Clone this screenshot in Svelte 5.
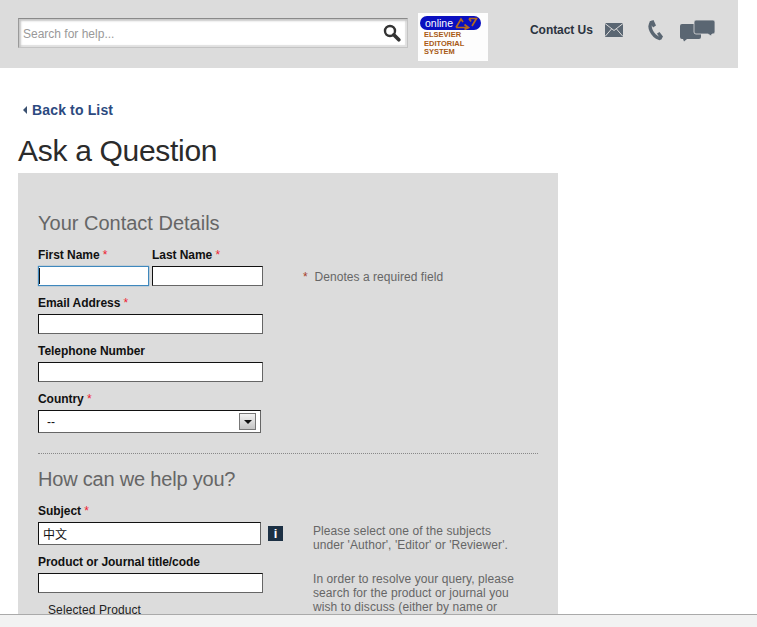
<script>
	let search = $state('');
	let subject = $state('中文');
</script>

<div class="page">
	<header class="top">
		<div class="search">
			<input type="text" placeholder="Search for help..." bind:value={search} />
			<svg class="search-icon" width="18" height="18" viewBox="0 0 18 18">
				<circle cx="7" cy="7" r="5" fill="none" stroke="#333" stroke-width="2.4" />
				<path d="M10.8 10.8 L15.8 15.8" stroke="#333" stroke-width="3.6" stroke-linecap="round" />
			</svg>
		</div>

		<div class="logo">
			<div class="pill">
				<span>online</span>
				<svg width="23" height="13" viewBox="0 0 23 13">
					<path d="M1 10.5 L6 2 L8 5 M1 10.5 H13 M9.5 7.5 L13.5 10.5 L9.5 12.5 M14 1.5 H21.5 L17 9 M14 1.5 L16 4.5" fill="none" stroke="#b4691f" stroke-width="1.7" />
				</svg>
			</div>
			<div class="logo-text">ELSEVIER<br />EDITORIAL<br />SYSTEM</div>
		</div>

		<div class="contact">
			<span class="contact-label">Contact Us</span>
			<svg class="mail" width="18" height="14" viewBox="0 0 18 14">
				<rect width="18" height="14" fill="#5a6672" />
				<path d="M0 0.5 L9 7.5 L18 0.5 M0 13.5 L6.5 6 M18 13.5 L11.5 6" fill="none" stroke="#dcdcdc" stroke-width="1" />
			</svg>
			<svg class="phone" width="16" height="21" viewBox="0 0 16 21">
				<path d="M4.5 2.5 C1 6 4.5 15.5 12.5 18.5" fill="none" stroke="#5a6672" stroke-width="3.4" stroke-linecap="round" />
				<path d="M2.5 1.5 L6.5 0 L9 5.5 L6 7.5 Z M10 13.5 L12.5 12 L16 16.5 L14 20 Z" fill="#5a6672" />
			</svg>
			<svg class="chat" width="35" height="22" viewBox="0 0 35 22">
				<path d="M2 4 H19 Q21 4 21 6 V17 Q21 19 19 19 H7 L4 21.5 L3 19 H2 Q0 19 0 17 V6 Q0 4 2 4 Z" fill="#5a6672" />
				<path d="M16 0 H33 Q35 0 35 2 V12 Q35 14 33 14 H32 L31 16 L28 14 H16 Q14 14 14 12 V2 Q14 0 16 0 Z" fill="#5a6672" stroke="#dcdcdc" stroke-width="0.8" />
			</svg>
		</div>
	</header>

	<main class="content">
		<a class="back" href="#list"><span class="back-arrow"></span>Back to List</a>
		<h1>Ask a Question</h1>

		<form class="panel">
			<h2>Your Contact Details</h2>

			<div class="name-row">
				<div class="field half">
					<label for="first">First Name <em>*</em></label>
					<input id="first" class="focused" type="text" />
				</div>
				<div class="field half">
					<label for="last">Last Name <em>*</em></label>
					<input id="last" type="text" />
				</div>
				<p class="required"><em>*</em>&nbsp; Denotes a required field</p>
			</div>

			<div class="field">
				<label for="email">Email Address <em>*</em></label>
				<input id="email" type="text" />
			</div>
			<div class="field">
				<label for="phone">Telephone Number</label>
				<input id="phone" type="text" />
			</div>
			<div class="field narrow">
				<label for="country">Country <em>*</em></label>
				<div class="select">
					<select id="country"><option>--</option></select>
					<span class="select-btn"></span>
				</div>
			</div>

			<div class="divider"></div>

			<h2 class="tight">How can we help you?</h2>

			<div class="help-grid">
				<div class="field subject">
					<label for="subject">Subject <em>*</em></label>
					<div class="with-info">
						<input id="subject" class="tall" type="text" bind:value={subject} />
						<span class="info">i</span>
					</div>
				</div>
				<p class="note first">Please select one of the subjects<br />under 'Author', 'Editor' or 'Reviewer'.</p>

				<div class="field">
					<label for="product">Product or Journal title/code</label>
					<input id="product" type="text" />
					<div class="selected">Selected Product</div>
				</div>
				<p class="note second">In order to resolve your query, please<br />search for the product or journal you<br />wish to discuss (either by name or</p>
			</div>
		</form>
	</main>

	<div class="bottom-bar"></div>
</div>

<style>
	:global(html), :global(body) {
		margin: 0;
		height: 100%;
		overflow: hidden;
		background: #fff;
	}

	.page {
		font-family: "Liberation Sans", Arial, sans-serif;
		font-size: 12px;
		color: #111;
	}

	.top {
		width: 738px;
		height: 68px;
		background: #dcdcdc;
		display: flex;
		box-sizing: border-box;
		padding: 13px 0 0 18px;
	}

	.search {
		width: 390px;
		height: 30px;
		margin-top: 5px;
		box-sizing: border-box;
		display: flex;
		align-items: center;
		background: #fff;
		border-top: 1px solid #8a8a8a;
		border-left: 1px solid #9a9a9a;
		border-right: 1px solid #c4c4c4;
		border-bottom: 1px solid #c4c4c4;
		box-shadow: inset 2px 2px 2px #c8c8c8, inset -2px -2px 1px #e0e0e0;
	}

	.search input {
		flex: 1;
		border: 0;
		background: transparent;
		outline: 0;
		height: 26px;
		padding: 1px 0 0 4px;
		font: 12px "Liberation Sans", Arial, sans-serif;
		min-width: 0;
	}

	.search input::placeholder {
		color: #999;
		opacity: 1;
	}

	.search-icon {
		margin-right: 6px;
	}

	.logo {
		width: 70px;
		height: 48px;
		margin-left: 10px;
		background: #fdfdfd;
		box-sizing: border-box;
		padding: 3px 2px 0;
	}

	.pill {
		height: 14px;
		width: 61px;
		background: #0a0fc0;
		border-radius: 7px;
		display: flex;
		align-items: center;
		justify-content: space-between;
		padding: 0 3px 0 5px;
		box-sizing: border-box;
		color: #fff;
		font-size: 10.5px;
		line-height: 14px;
	}

	.logo-text {
		margin: 1px 0 0 4px;
		font-size: 7.5px;
		line-height: 8.7px;
		font-weight: bold;
		color: #a85a14;
	}

	.contact {
		display: flex;
		align-items: flex-start;
		margin-left: 42px;
		padding-top: 7px;
	}

	.contact-label {
		font-weight: bold;
		color: #2b3340;
		line-height: 20px;
		width: 75px;
		letter-spacing: -0.05px;
	}

	.mail {
		margin-top: 3px;
	}

	.phone {
		margin: 0 0 0 24px;
	}

	.chat {
		margin: 0 0 0 17px;
	}

	.back {
		display: block;
		margin: 33px 0 0 23px;
		line-height: 18px;
		font-size: 14px;
		font-weight: bold;
		color: #2c4a80;
		text-decoration: none;
		letter-spacing: 0.15px;
	}

	.back-arrow {
		display: inline-block;
		width: 0;
		height: 0;
		border-style: solid;
		border-width: 4px 4px 4px 0;
		border-color: transparent #3a5070 transparent transparent;
		margin-right: 5px;
		vertical-align: 1px;
	}

	h1 {
		margin: 14px 0 4px 18px;
		font-size: 30px;
		line-height: 36px;
		font-weight: normal;
		color: #2b2b2b;
		letter-spacing: -0.3px;
	}

	.panel {
		width: 540px;
		box-sizing: border-box;
		margin-left: 18px;
		padding: 38px 20px 40px;
		background: #dcdcdc;
	}

	h2 {
		margin: 0 0 11px;
		font-size: 20px;
		line-height: 24px;
		font-weight: normal;
		color: #666;
	}

	h2.tight {
		letter-spacing: -0.2px;
	}

	label {
		display: block;
		height: 20px;
		line-height: 18px;
		font-weight: bold;
		white-space: nowrap;
		letter-spacing: -0.05px;
	}

	em {
		font-style: normal;
		font-weight: normal;
		color: #ee1c32;
	}

	.field {
		width: 225px;
		margin-bottom: 8px;
	}

	.field.half {
		width: 111px;
	}

	.field.narrow {
		width: 223px;
		margin-bottom: 0;
	}

	input {
		display: block;
		width: 100%;
		box-sizing: border-box;
		height: 20px;
		padding: 0 4px;
		margin: 0;
		background: #fff;
		border: 1px solid;
		border-color: #111 #666 #666 #111;
		border-radius: 0;
		font: 12px "Liberation Sans", "Noto Sans CJK SC", Arial, sans-serif;
		color: #111;
		outline: 0;
	}

	input.focused {
		border-color: #3f88bd;
		box-shadow: 0 0 1px #3f88bd;
		background: linear-gradient(#111, #111) 0 1px / 1px 16px no-repeat #fff;
	}

	input.tall {
		height: 23px;
		width: 223px;
		flex: none;
	}

	.name-row {
		display: flex;
		gap: 3px;
	}

	.required {
		margin: 24px 0 0 37px;
		line-height: 14px;
		color: #666;
		white-space: nowrap;
		letter-spacing: 0.05px;
	}

	.required em {
		color: #a5402a;
	}

	.select {
		position: relative;
		height: 23px;
	}

	select {
		display: block;
		width: 100%;
		height: 23px;
		box-sizing: border-box;
		appearance: none;
		background: #fff;
		border: 1px solid;
		border-color: #111 #666 #666 #111;
		border-radius: 0;
		padding: 0 0 0 8px;
		font: 12px "Liberation Sans", Arial, sans-serif;
		color: #111;
	}

	.select-btn {
		position: absolute;
		top: 3px;
		right: 5px;
		width: 17px;
		height: 17px;
		box-sizing: border-box;
		border: 1px solid #777;
		background: linear-gradient(#f2f2f2, #c4c4c4);
	}

	.select-btn::after {
		content: '';
		position: absolute;
		left: 4px;
		top: 6px;
		border-style: solid;
		border-width: 4px 4px 0;
		border-color: #111 transparent transparent;
	}

	.divider {
		margin: 20px 0 13px;
		border-top: 1px dotted #888;
	}

	.help-grid {
		display: grid;
		grid-template-columns: 275px 1fr;
	}

	.field.subject {
		width: auto;
	}

	.with-info {
		display: flex;
		align-items: center;
		gap: 7px;
	}

	.info {
		width: 15px;
		height: 15px;
		background: #1c3044;
		color: #fff;
		font-size: 13px;
		font-weight: bold;
		line-height: 15px;
		text-align: center;
	}

	.note {
		margin: 0;
		color: #666;
		line-height: 14px;
		white-space: nowrap;
		letter-spacing: 0.08px;
	}

	.note.first {
		padding-top: 22px;
	}

	.note.second {
		padding-top: 19px;
	}

	.selected {
		margin: 10px 0 0 10px;
		line-height: 14px;
		color: #222;
		letter-spacing: 0.1px;
	}

	.bottom-bar {
		position: fixed;
		left: 0;
		right: 0;
		bottom: 0;
		height: 12px;
		background: #f2f2f2;
		border-top: 1px solid #aaa;
	}
</style>
